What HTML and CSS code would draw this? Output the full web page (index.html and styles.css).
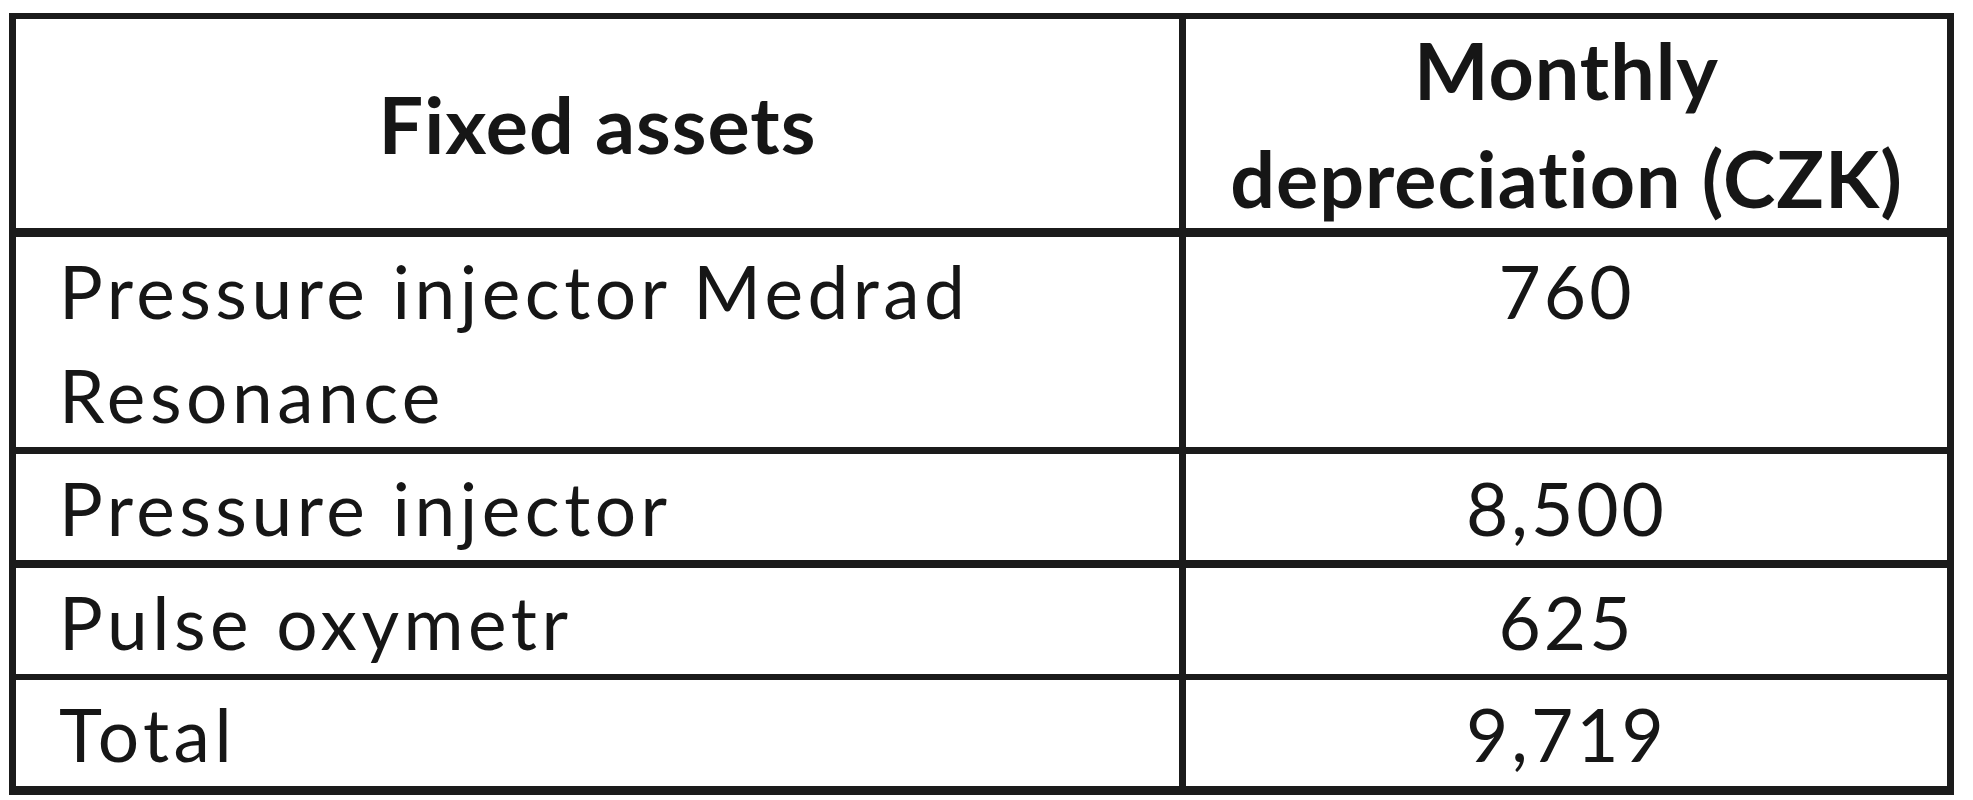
FILE: index.html
```html
<!DOCTYPE html>
<html lang="en">
<head>
<meta charset="utf-8">
<title>Fixed assets – monthly depreciation</title>
<link rel="stylesheet" href="styles.css">
</head>
<body>
<table class="assets">
  <colgroup>
    <col class="col-name">
    <col class="col-value">
  </colgroup>
  <thead>
    <tr class="row-head">
      <th class="cell-name">Fixed assets</th>
      <th class="cell-value"><div class="head-lines">Monthly<br>depreciation (CZK)</div></th>
    </tr>
  </thead>
  <tbody>
    <tr class="row-double">
      <td class="cell-name">Pressure injector Medrad<br>Resonance</td>
      <td class="cell-value">760</td>
    </tr>
    <tr class="row-single row-b8">
      <td class="cell-name">Pressure injector</td>
      <td class="cell-value">8,500</td>
    </tr>
    <tr class="row-single row-b6">
      <td class="cell-name">Pulse oxymetr</td>
      <td class="cell-value">625</td>
    </tr>
    <tr class="row-single row-last">
      <td class="cell-name">Total</td>
      <td class="cell-value">9,719</td>
    </tr>
  </tbody>
</table>
</body>
</html>
```

FILE: styles.css
```css
html, body {
  margin: 0;
  padding: 0;
  background: #ffffff;
}

body {
  font-family: Lato, "Open Sans", "Liberation Sans", sans-serif;
  color: #161616;
  font-variant-ligatures: none;
}

.assets {
  margin: 13px 0 0 9px;
  width: 1945px;
  table-layout: fixed;
  border-collapse: separate;
  border-spacing: 0;
  border: 7px solid #1b1b1b;
  border-top-width: 6px;
  border-bottom-width: 9px;
}

.col-name { width: 1170px; }
.col-value { width: 761px; }

.assets th,
.assets td {
  padding: 0;
  margin: 0;
  box-sizing: content-box;
}

.cell-name {
  border-right: 7px solid #1b1b1b;
}

/* header */
.row-head th {
  height: 209px;
  font-weight: 700;
  font-size: 79px;
  letter-spacing: 1px;
  line-height: 108px;
  text-align: center;
  vertical-align: middle;
  border-bottom: 9px solid #1b1b1b;
}

.head-lines {
  margin: -3px 0 -4px;
}

/* body rows */
.assets td {
  font-size: 73px;
  font-weight: 400;
  line-height: 104px;
  vertical-align: top;
  padding-top: 2px;
}

.assets td.cell-name {
  text-align: left;
  padding-left: 43px;
  letter-spacing: 4.5px;
}

.assets td.cell-value {
  text-align: center;
  letter-spacing: 3px;
}

.row-double td {
  height: 207px;
  border-bottom: 7px solid #1b1b1b;
}

.row-single td {
  height: 102px;
}

.row-b8 td {
  border-bottom: 8px solid #1b1b1b;
}

.row-b6 td {
  height: 101px;
  border-bottom: 6px solid #1b1b1b;
}

.row-last td {
  border-bottom: 0;
}
```
